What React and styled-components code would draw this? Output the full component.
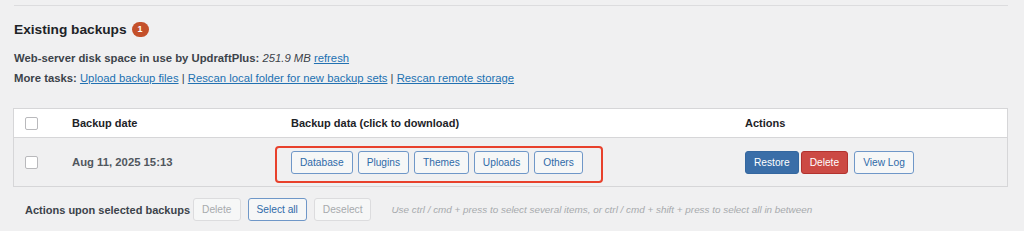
import React from 'react'
import styled, { createGlobalStyle } from 'styled-components'

const GlobalStyle = createGlobalStyle`
  html, body {
    margin: 0;
    padding: 0;
    background: #f0f0f1;
  }
  body {
    font-family: "Liberation Sans", Arial, sans-serif;
    color: #3c434a;
  }
`

const Page = styled.div`
  width: 995px;
  padding: 5px 0 0 13px;
`

const Divider = styled.div`
  height: 1px;
  margin-left: 1px;
  background: #dcdcde;
`

const Heading = styled.h2`
  display: flex;
  align-items: center;
  gap: 5px;
  margin: 14px 0 0 1px;
  height: 18px;
  font-size: 13.7px;
  font-weight: 700;
  color: #1d2327;
`

const Badge = styled.span`
  display: inline-flex;
  align-items: center;
  justify-content: center;
  width: 17px;
  height: 15px;
  border-radius: 8px;
  background: #c4502a;
  color: #fff;
  font-size: 9px;
  font-weight: 700;
`

const InfoLine = styled.p`
  margin: 0 0 0 1px;
  height: 20px;
  line-height: 20px;
  font-size: 11.3px;
  color: #3c434a;
  &:first-of-type {
    margin-top: 10px;
  }
`

const Strong = styled.span`
  font-weight: 700;
`

const Link = styled.a`
  color: #2271b1;
  text-decoration: underline;
  cursor: pointer;
`

const Table = styled.div`
  margin-top: 20px;
  border: 1px solid #d6d6d8;
`

const Row = styled.div`
  display: grid;
  grid-template-columns: 58px 219px 454px 1fr;
  align-items: center;
  height: ${p => p.$height}px;
  background: ${p => p.$head ? '#fff' : '#f0f0f1'};
  border-top: ${p => p.$head ? 'none' : '1px solid #d6d6d8'};
`

const CheckCell = styled.div`
  padding-left: 11px;
  display: flex;
  align-items: center;
`

const Checkbox = styled.span`
  display: block;
  width: 11px;
  height: 11px;
  border: 1px solid #b9b9bc;
  border-radius: 2px;
  background: #fff;
`

const HeadCell = styled.div`
  font-size: 11px;
  font-weight: 700;
  color: #1d2327;
`

const DateCell = styled.div`
  font-size: 11.3px;
  font-weight: 700;
  color: #50575e;
`

const DataCell = styled.div`
  position: relative;
  display: flex;
  gap: 5px;
`

const Highlight = styled.div`
  position: absolute;
  left: -16px;
  top: -5px;
  width: 324px;
  height: 33px;
  border: 2px solid #e8412c;
  border-radius: 4px;
  pointer-events: none;
`

const Actions = styled.div`
  display: flex;
  gap: 2px;
`

const Button = styled.button`
  box-sizing: border-box;
  height: 23px;
  padding: 0 8px;
  border-radius: 3px;
  font-family: inherit;
  font-size: 10.2px;
  line-height: 21px;
  cursor: pointer;
  border: 1px solid ${p => ({
    primary: '#34679f',
    danger: '#b2322e',
    disabled: '#dcdcde',
  }[p.$kind] || '#6f97c8')};
  background: ${p => ({
    primary: '#3a6ea8',
    danger: '#cc4a44',
    disabled: '#f6f7f7',
  }[p.$kind] || '#f6f7f7')};
  color: ${p => ({
    primary: '#fff',
    danger: '#fff',
    disabled: '#a7aaad',
  }[p.$kind] || '#2f6aa8')};
  margin-right: ${p => p.$gap || 0}px;
`

const Footer = styled.div`
  display: flex;
  align-items: center;
  gap: 7px;
  margin-top: 11px;
  padding-left: 12px;
`

const FooterLabel = styled.span`
  font-size: 11px;
  font-weight: 700;
  color: #3c434a;
  margin-right: -4px;
`

const Hint = styled.span`
  margin-left: 13px;
  font-size: 9.9px;
  font-style: italic;
  color: #a7aaad;
`

const dataButtons = ['Database', 'Plugins', 'Themes', 'Uploads', 'Others']

export default function App() {
  return (
    <>
      <GlobalStyle />
      <Page>
        <Divider />
        <Heading>
          Existing backups <Badge>1</Badge>
        </Heading>
        <InfoLine>
          <Strong>Web-server disk space in use by UpdraftPlus: </Strong>
          <em>251.9 MB</em> <Link>refresh</Link>
        </InfoLine>
        <InfoLine>
          <Strong>More tasks: </Strong>
          <Link>Upload backup files</Link> | <Link>Rescan local folder for new backup sets</Link> |{' '}
          <Link>Rescan remote storage</Link>
        </InfoLine>

        <Table>
          <Row $head $height={28}>
            <CheckCell><Checkbox /></CheckCell>
            <HeadCell>Backup date</HeadCell>
            <HeadCell>Backup data (click to download)</HeadCell>
            <HeadCell>Actions</HeadCell>
          </Row>
          <Row $height={48}>
            <CheckCell><Checkbox /></CheckCell>
            <DateCell>Aug 11, 2025 15:13</DateCell>
            <DataCell>
              {dataButtons.map(name => (
                <Button key={name}>{name}</Button>
              ))}
              <Highlight />
            </DataCell>
            <Actions>
              <Button $kind="primary">Restore</Button>
              <Button $kind="danger" $gap={4}>Delete</Button>
              <Button>View Log</Button>
            </Actions>
          </Row>
        </Table>

        <Footer>
          <FooterLabel>Actions upon selected backups</FooterLabel>
          <Button $kind="disabled">Delete</Button>
          <Button>Select all</Button>
          <Button $kind="disabled">Deselect</Button>
          <Hint>Use ctrl / cmd + press to select several items, or ctrl / cmd + shift + press to select all in between</Hint>
        </Footer>
      </Page>
    </>
  )
}
